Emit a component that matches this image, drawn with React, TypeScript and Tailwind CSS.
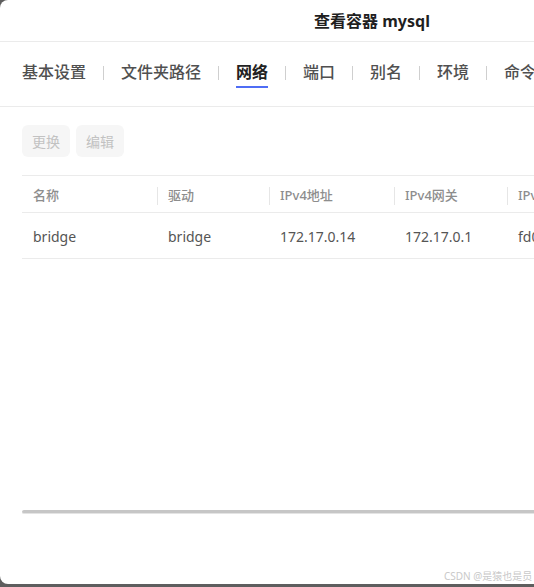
import React from "react";

const tabs = ["基本设置", "文件夹路径", "网络", "端口", "别名", "环境", "命令"];
const active = "网络";

const cols = [
  { title: "名称", w: "w-[135px]", value: "bridge" },
  { title: "驱动", w: "w-[112px]", value: "bridge" },
  { title: "IPv4地址", w: "w-[125px]", value: "172.17.0.14" },
  { title: "IPv4网关", w: "w-[113px]", value: "172.17.0.1" },
  { title: "IPv6地址", w: "w-[160px]", value: "fd00::1" },
];

export default function App() {
  return (
    <div
      className="w-[534px] h-[587px] bg-[#5e5e5e] overflow-hidden"
      style={{ fontFamily: '"Noto Sans", "Noto Sans CJK SC", sans-serif' }}
    >
      <div className="relative w-[744px] h-[584px] bg-white rounded-lg flex flex-col">
        {/* title */}
        <div className="h-[42px] shrink-0 flex items-center justify-center border-b border-[#ebebeb]">
          <span className="text-[16px] font-bold text-[#1f1f1f]">查看容器 mysql</span>
        </div>

        {/* tabs */}
        <div className="h-[65px] shrink-0 flex items-start pt-[18px] pl-[22px] gap-[17px] border-b border-[#ebebeb]">
          {tabs.map((t, i) => (
            <React.Fragment key={t}>
              {i > 0 && <div className="w-px h-[14px] bg-[#cfcfcf] mt-[6px]" />}
              <div className="flex flex-col items-stretch">
                <span
                  className={
                    t === active
                      ? "text-[16px] leading-[24px] font-bold text-[#222]"
                      : "text-[16px] leading-[24px] font-medium text-[#505050]"
                  }
                >
                  {t}
                </span>
                {t === active && <div className="mt-[2px] h-[2px] bg-[#4f6df5]" />}
              </div>
            </React.Fragment>
          ))}
        </div>

        {/* toolbar */}
        <div className="flex gap-[6px] pl-[22px] pt-[18px]">
          <button className="w-[48px] h-[32px] rounded-md bg-[#f6f6f6] text-[14px] text-[#c2c2c2]">更换</button>
          <button className="w-[48px] h-[32px] rounded-md bg-[#f6f6f6] text-[14px] text-[#c2c2c2]">编辑</button>
        </div>

        {/* table */}
        <div className="ml-[22px] mt-[18px] border-t border-[#ebebeb]">
          <div className="flex h-[37px] items-center border-b border-[#ebebeb]">
            {cols.map((c, i) => (
              <div key={c.title} className={`${c.w} shrink-0 relative flex items-center h-full pt-[3px]`}>
                {i > 0 && <div className="absolute left-0 top-[11px] w-px h-[18px] bg-[#e6e6e6]" />}
                <span className="pl-[11px] text-[13px] font-medium text-[#8d8d8d]">{c.title}</span>
              </div>
            ))}
          </div>
          <div className="flex h-[46px] items-center border-b border-[#ebebeb]">
            {cols.map((c) => (
              <div key={c.title} className={`${c.w} shrink-0 pl-[11px] pt-[1px] text-[14px] text-[#555]`}>
                {c.value}
              </div>
            ))}
          </div>
        </div>

        <div className="flex-1" />

        {/* horizontal scrollbar */}
        <div className="ml-[22px] mb-[70px] h-[4px] rounded-l-full bg-[#c6c6c6] border-b border-[#e4e4e4]" />

        <div className="absolute left-[444px] top-[569px] text-[10px] text-[#c9c9c9] whitespace-nowrap">
          CSDN @是猿也是员
        </div>
      </div>
    </div>
  );
}
